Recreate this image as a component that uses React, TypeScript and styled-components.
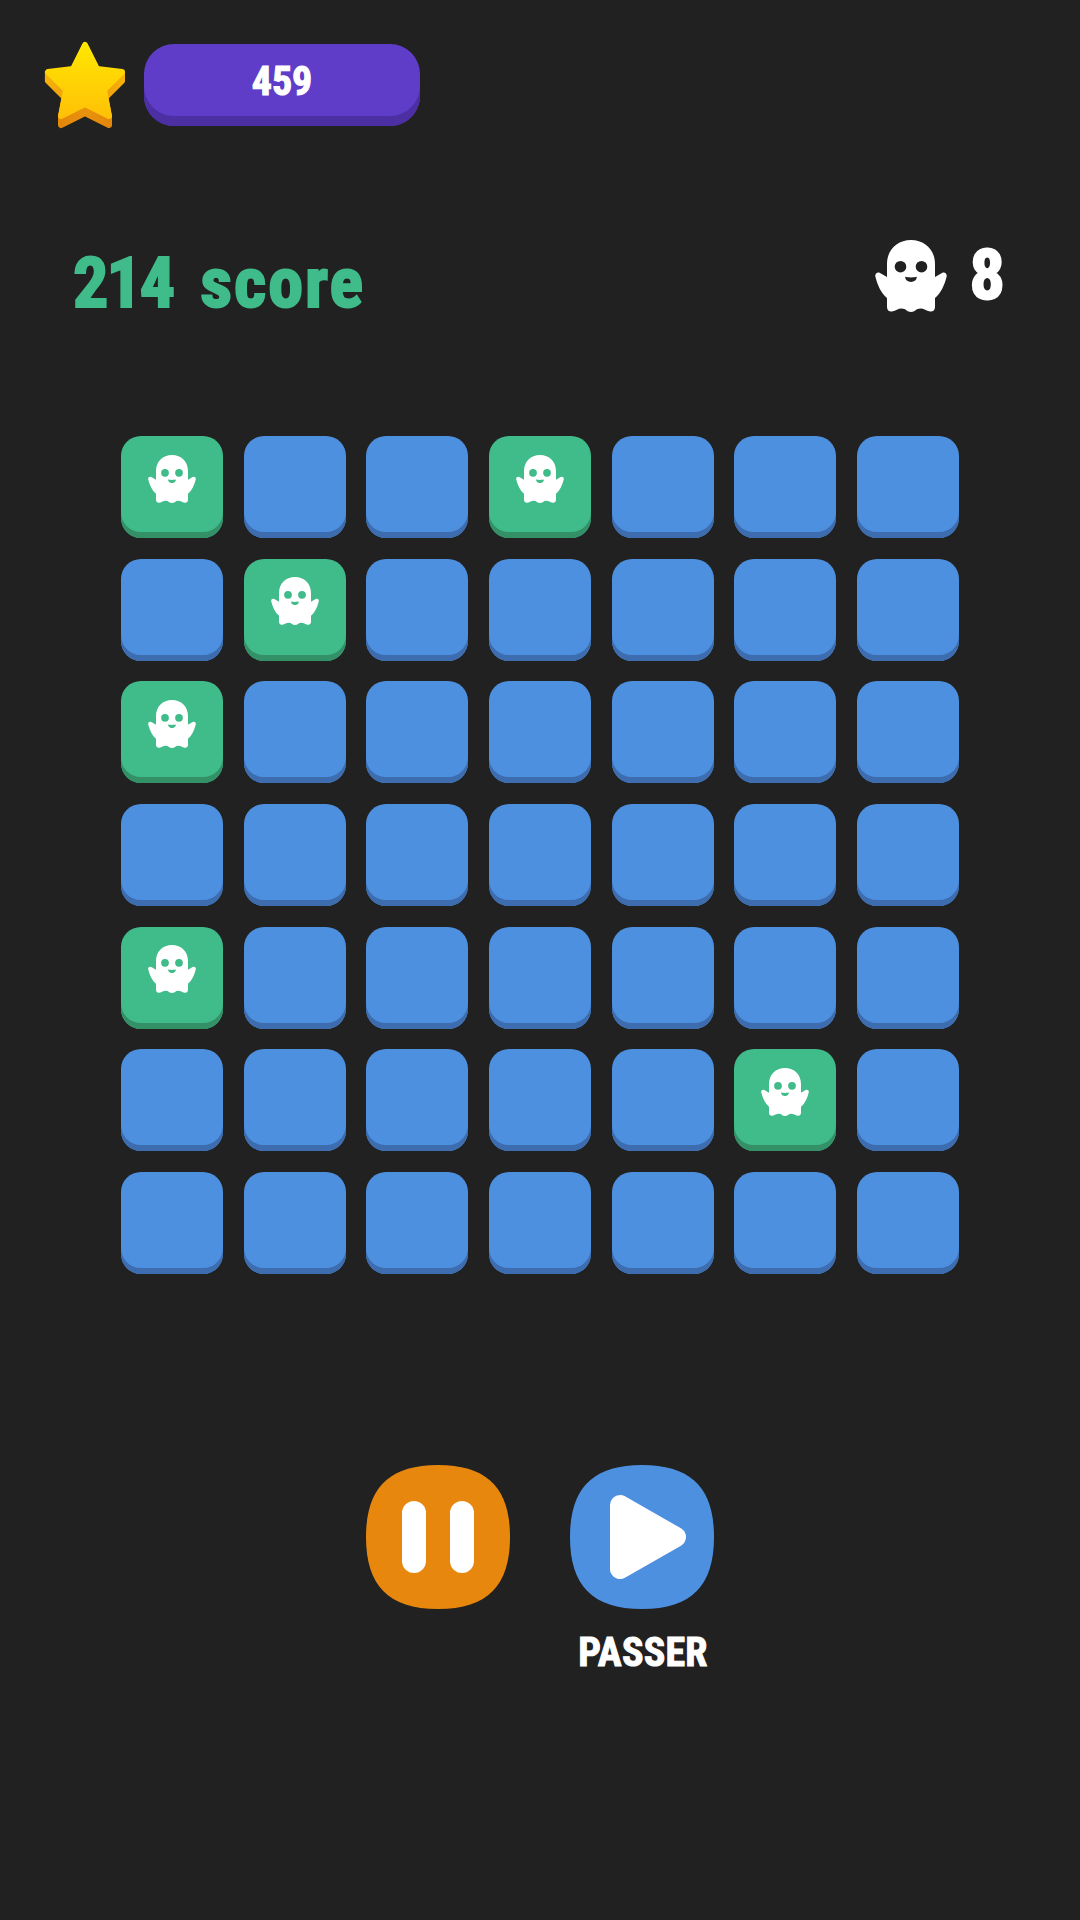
import React from "react";
import styled, { createGlobalStyle } from "styled-components";

const GlobalStyle = createGlobalStyle`
  html, body {
    margin: 0;
    padding: 0;
    background: #212121;
  }
`;

const Screen = styled.div`
  width: 1080px;
  height: 1920px;
  background: #212121;
  color: #fff;
  font-family: "Roboto Condensed", "Roboto", sans-serif;
  font-stretch: 75%;
  font-weight: 700;
  overflow: hidden;
`;

const TopBar = styled.div`
  display: flex;
  align-items: flex-start;
  gap: 18px;
  padding: 41px 0 0 44px;
  height: 88px;
`;

const Pill = styled.div`
  width: 276px;
  height: 82px;
  margin-top: 3px;
  box-sizing: border-box;
  padding-bottom: 7px;
  display: flex;
  align-items: center;
  justify-content: center;
  background: #5f3dc8;
  border-radius: 30px;
  box-shadow: inset 0 -10px 0 #4c2fa3;
  font-size: 40px;
  -webkit-text-stroke: 1px #fff;
`;

const ScoreRow = styled.div`
  display: flex;
  align-items: flex-start;
  justify-content: space-between;
  margin-top: 111px;
  padding: 0 75px 0 73px;
  height: 72px;
`;

const ScoreText = styled.div`
  margin-top: 7px;
  font-size: 70px;
  line-height: 72px;
  letter-spacing: 2px;
  word-spacing: 9px;
  color: #40bb8a;
  -webkit-text-stroke: 2px #40bb8a;
  white-space: pre;
`;

const ScoreValue = styled.span`
  letter-spacing: -2px;
`;

const Lives = styled.div`
  display: flex;
  align-items: flex-start;
  gap: 23px;
`;

const LivesCount = styled.div`
  margin-top: -1px;
  font-size: 70px;
  line-height: 72px;
  -webkit-text-stroke: 2px #fff;
`;

const Board = styled.div`
  display: grid;
  grid-template-columns: repeat(7, 102px);
  grid-auto-rows: 102px;
  gap: 20.66px;
  margin: 124px 0 0 121px;
`;

const Tile = styled.div<{ $on: boolean }>`
  box-sizing: border-box;
  padding-bottom: 17px;
  display: flex;
  align-items: center;
  justify-content: center;
  border-radius: 20px;
  background: ${(p) => (p.$on ? "#40bb8a" : "#4e90e0")};
  box-shadow: inset 0 -6px 0 ${(p) => (p.$on ? "#339067" : "#3d6dae")};
`;

const Controls = styled.div`
  display: flex;
  gap: 60px;
  margin: 191px 0 0 366px;
`;

const ControlColumn = styled.div`
  width: 144px;
  display: flex;
  flex-direction: column;
  align-items: center;
`;

const RoundButton = styled.button<{ $color: string }>`
  width: 144px;
  height: 144px;
  padding: 0;
  border: 0;
  background: none;
  color: ${(p) => p.$color};
  display: block;
`;

const SkipLabel = styled.div`
  margin-top: 24px;
  margin-left: 2px;
  font-size: 40px;
  line-height: 40px;
  letter-spacing: 0.2px;
  -webkit-text-stroke: 1px #fff;
  white-space: nowrap;
`;

const GhostIcon = ({ size, face }: { size: number; face: string }) => (
  <svg width={size} height={size} viewBox="0 0 72 72">
    <path
      fill="#fff"
      d="M12 24C12 10 22 0 36 0S60 10 60 24V37L67 33C70 31.500 72.500 34 71.500 37C69.500 45 66 53 60 58V67C60 70.500 57.500 72 55 71.500C51 70.800 49 68.500 45.500 68.500C41 68.500 40 72 36 72C32 72 31 68.500 26.500 68.500C23 68.500 21 70.800 17 71.500C14.500 72 12 70.500 12 67V58C6 53 2.500 45 .5 37C-.5 34 2 31.500 5 33L12 37Z"
    />
    <circle cx="25.500" cy="26.700" r="5.800" fill={face} />
    <circle cx="46.500" cy="26.700" r="5.800" fill={face} />
    <path fill={face} d="M30.300 36.800C33 37.600 39 37.600 41.700 36.800C42.200 39.800 39 42 36 42C33 42 29.800 39.800 30.300 36.800Z" />
  </svg>
);

const STAR = "M41 4L53 28L78 31L60 49L65 75L41 63L17 75L22 49L4 31L29 28Z";

const StarIcon = () => (
  <svg width="82" height="88" viewBox="0 0 82 88">
    <defs>
      <linearGradient id="starFace" x1="0" y1="0" x2="0" y2="1">
        <stop offset="0" stopColor="#ffe600" />
        <stop offset="1" stopColor="#ffc107" />
      </linearGradient>
      <linearGradient id="starSide" gradientUnits="userSpaceOnUse" x1="0" y1="30" x2="0" y2="86">
        <stop offset="0" stopColor="#f7b50c" />
        <stop offset="1" stopColor="#e07f0c" />
      </linearGradient>
    </defs>
    {[9, 8, 7, 6, 5, 4, 3, 2, 1].map((d) => (
      <path
        key={d}
        d={STAR}
        transform={`translate(0 ${d})`}
        fill="url(#starSide)"
        stroke="url(#starSide)"
        strokeWidth="6"
        strokeLinejoin="round"
      />
    ))}
    <path d={STAR} fill="url(#starFace)" stroke="url(#starFace)" strokeWidth="6" strokeLinejoin="round" />
  </svg>
);

const SQUIRCLE = "M72 0C122 0 144 24 144 72C144 120 122 144 72 144C22 144 0 120 0 72C0 24 22 0 72 0Z";

const PauseIcon = () => (
  <svg width="144" height="144" viewBox="0 0 144 144">
    <path d={SQUIRCLE} fill="currentColor" />
    <rect x="36" y="36" width="24" height="72" rx="12" fill="#fff" />
    <rect x="84" y="36" width="24" height="72" rx="12" fill="#fff" />
  </svg>
);

const PlayIcon = () => (
  <svg width="144" height="144" viewBox="0 0 144 144">
    <path d={SQUIRCLE} fill="currentColor" />
    <path d="M50 40L106 72L50 104Z" fill="#fff" stroke="#fff" strokeWidth="20" strokeLinejoin="round" />
  </svg>
);

// which cells are lit, row by row
const LIT = ["0,0", "0,3", "1,1", "2,0", "4,0", "5,5"];

const App: React.FC = () => {
  const cells = [];
  for (let r = 0; r < 7; r++) {
    for (let c = 0; c < 7; c++) {
      const on = LIT.includes(`${r},${c}`);
      cells.push(
        <Tile key={`${r}-${c}`} $on={on}>
          {on && <GhostIcon size={48} face="#40bb8a" />}
        </Tile>
      );
    }
  }

  return (
    <Screen>
      <GlobalStyle />
      <TopBar>
        <StarIcon />
        <Pill>459</Pill>
      </TopBar>

      <ScoreRow>
        <ScoreText>
          <ScoreValue>214</ScoreValue> score
        </ScoreText>
        <Lives>
          <GhostIcon size={72} face="#212121" />
          <LivesCount>8</LivesCount>
        </Lives>
      </ScoreRow>

      <Board>{cells}</Board>

      <Controls>
        <ControlColumn>
          <RoundButton $color="#e8870e">
            <PauseIcon />
          </RoundButton>
        </ControlColumn>
        <ControlColumn>
          <RoundButton $color="#4e90e0">
            <PlayIcon />
          </RoundButton>
          <SkipLabel>PASSER</SkipLabel>
        </ControlColumn>
      </Controls>
    </Screen>
  );
};

export default App;
